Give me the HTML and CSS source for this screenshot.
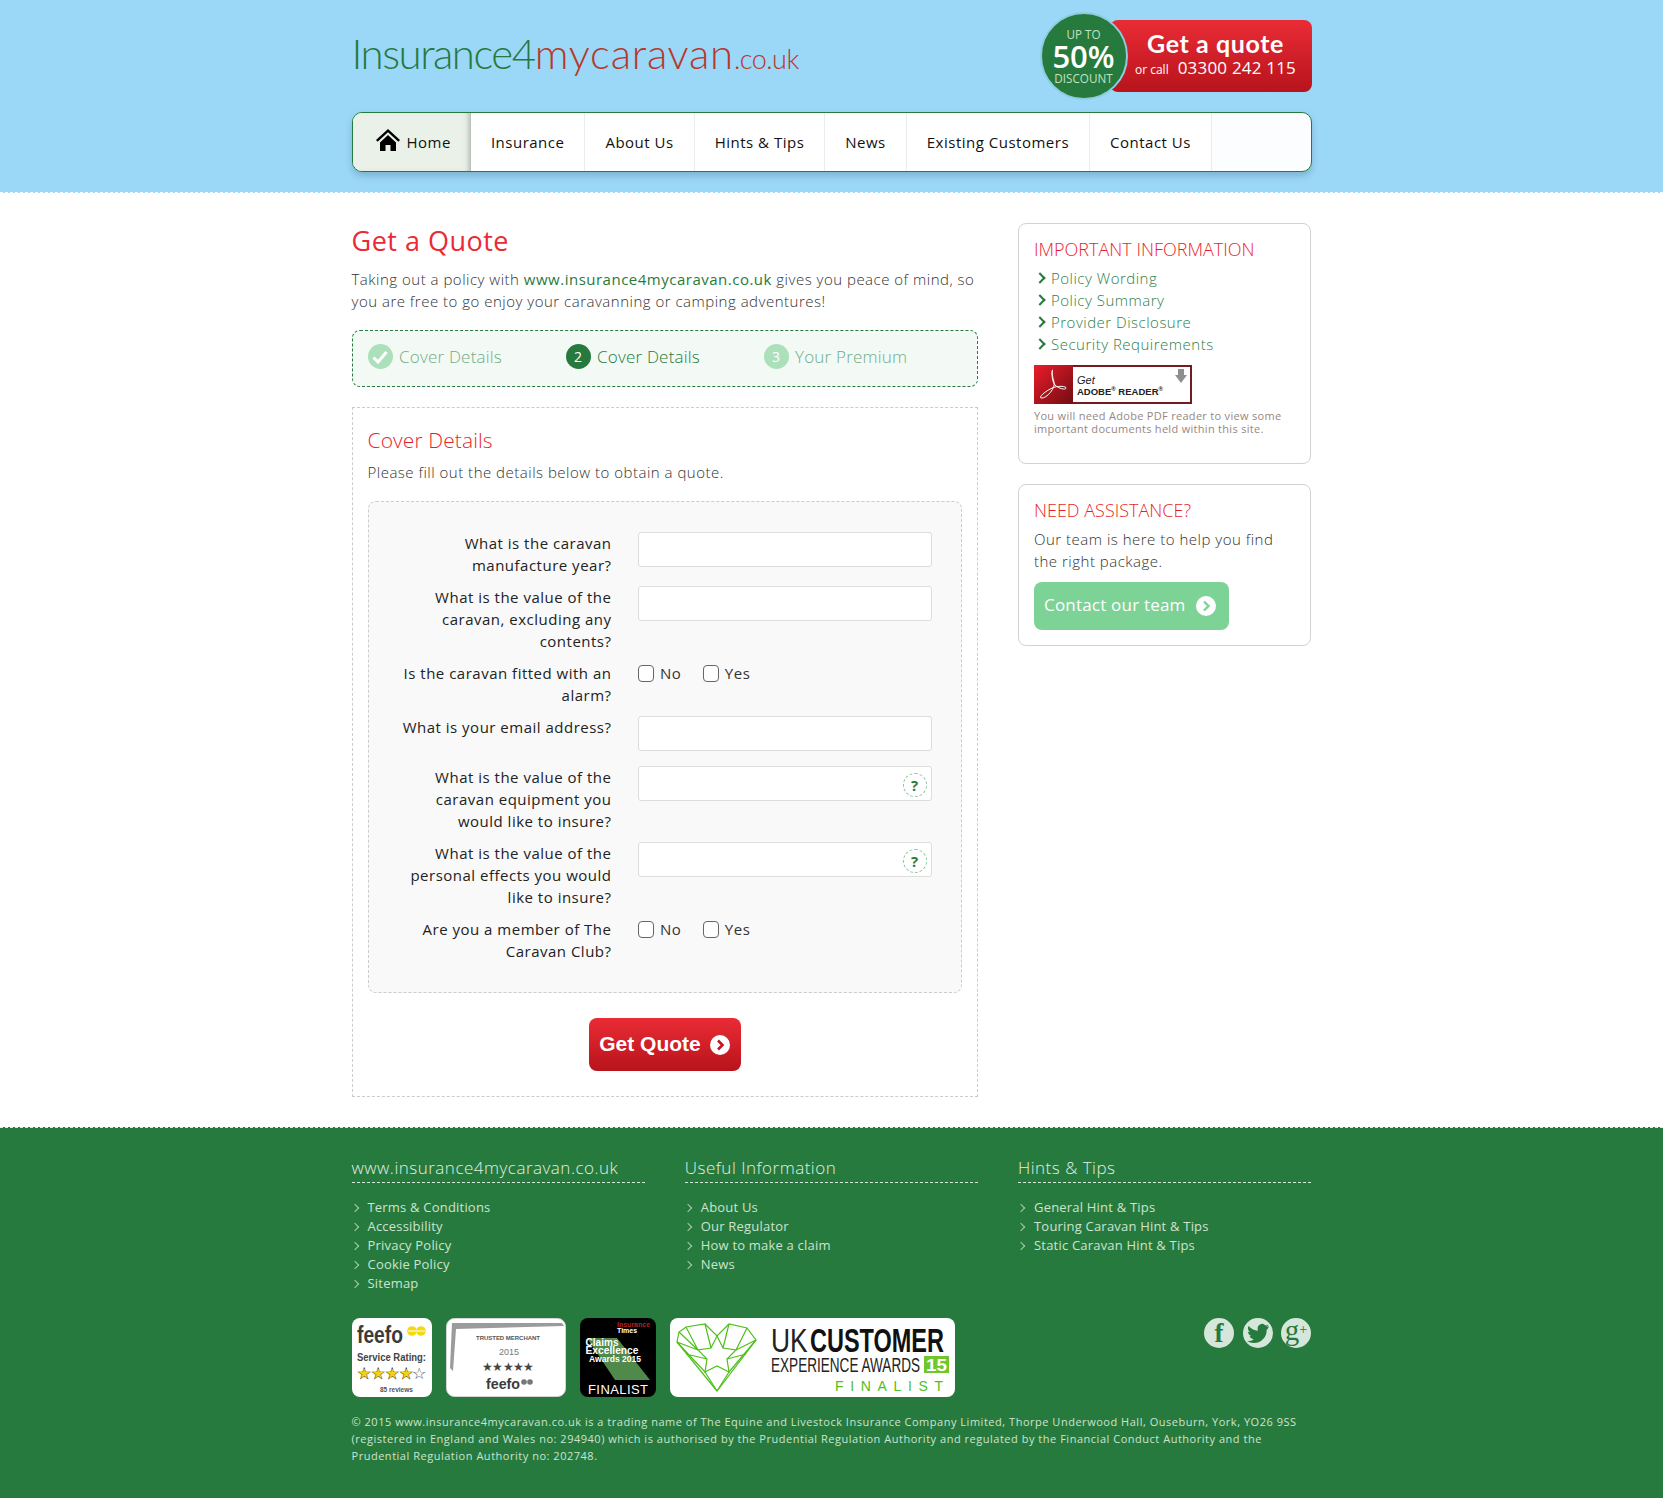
FILE: index.html
```html
<!DOCTYPE html>
<html lang="en">
<head>
<meta charset="utf-8">
<title>Get a Quote - Insurance4mycaravan.co.uk</title>
<link rel="stylesheet" href="styles.css">
</head>
<body>
<header class="site-header">
  <div class="wrap">
    <div class="top-row">
      <a class="logo" href="#"><span class="logo-green">Insurance4</span><span class="logo-red">mycaravan</span><span class="logo-tld">.co.uk</span></a>
      <div class="promo">
        <div class="promo-badge"><span class="pb-small">UP TO</span><span class="pb-big">50%</span><span class="pb-small">DISCOUNT</span></div>
        <div class="promo-cta">
          <span class="cta-main">Get a quote</span>
          <span class="cta-sub"><small>or call</small><b>03300 242 115</b></span>
        </div>
      </div>
    </div>
    <nav class="nav">
      <a class="nav-item nav-home" href="#">
        <svg class="home-icon" viewBox="0 0 24 22" width="24" height="22"><path d="M12 0 0 11l1.600 1.800L12 3.200l10.400 9.600L24 11z" fill="#000"/><path d="M4 13.500 12 6l8 7.500V22h-5.500v-6h-5v6H4z" fill="#000"/></svg>
        Home</a>
      <a class="nav-item" href="#">Insurance</a>
      <a class="nav-item" href="#">About Us</a>
      <a class="nav-item" href="#">Hints &amp; Tips</a>
      <a class="nav-item" href="#">News</a>
      <a class="nav-item" href="#">Existing Customers</a>
      <a class="nav-item" href="#">Contact Us</a>
    </nav>
  </div>
</header>

<main class="wrap main">
  <section class="content">
    <h1>Get a Quote</h1>
    <p class="intro">Taking out a policy with <a href="#">www.insurance4mycaravan.co.uk</a> gives you peace of mind, so you are free to go enjoy your caravanning or camping adventures!</p>
    <div class="steps">
      <div class="step step-done"><span class="step-num"><svg viewBox="0 0 16 14" width="16" height="14"><path d="M1.500 7.500 6 12 14.500 2" fill="none" stroke="#fff" stroke-width="3"/></svg></span>Cover Details</div>
      <div class="step step-active"><span class="step-num">2</span>Cover Details</div>
      <div class="step step-next"><span class="step-num">3</span>Your Premium</div>
    </div>
    <div class="form-box">
      <h2>Cover Details</h2>
      <p class="form-intro">Please fill out the details below to obtain a quote.</p>
      <form class="fields">
        <label class="q">What is the caravan manufacture year?</label>
        <div class="a"><span class="input"></span></div>
        <label class="q">What is the value of the caravan, excluding any contents?</label>
        <div class="a"><span class="input"></span></div>
        <label class="q">Is the caravan fitted with an alarm?</label>
        <div class="a checks"><span class="check"><i></i>No</span><span class="check"><i></i>Yes</span></div>
        <label class="q">What is your email address?</label>
        <div class="a"><span class="input"></span></div>
        <label class="q">What is the value of the caravan equipment you would like to insure?</label>
        <div class="a"><span class="input"><span class="help">?</span></span></div>
        <label class="q">What is the value of the personal effects you would like to insure?</label>
        <div class="a"><span class="input"><span class="help">?</span></span></div>
        <label class="q">Are you a member of The Caravan Club?</label>
        <div class="a checks"><span class="check"><i></i>No</span><span class="check"><i></i>Yes</span></div>
      </form>
      <div class="submit-row">
        <a class="btn-quote" href="#"><span class="btn-label">Get Quote</span>
          <svg viewBox="0 0 20 20" width="20" height="20"><circle cx="10" cy="10" r="10" fill="#fff"/><path d="M8 5.500 12.500 10 8 14.500" fill="none" stroke="#c5161f" stroke-width="2.600"/></svg>
        </a>
      </div>
    </div>
  </section>

  <aside class="sidebar">
    <div class="card card-info">
      <h3>IMPORTANT INFORMATION</h3>
      <ul class="doc-list">
        <li>Policy Wording</li>
        <li>Policy Summary</li>
        <li>Provider Disclosure</li>
        <li>Security Requirements</li>
      </ul>
      <div class="adobe">
        <div class="adobe-red"><svg viewBox="0 0 38 38" width="38" height="38"><path d="M19 5c-2 0 0 9 1 12 2 5-7 17-13 16-3-1 7-9 14-11 4-1 11-1 11 1s-7 1-11-3c-3-3-4-15-2-15z" fill="none" stroke="#fff" stroke-width="1"/></svg></div>
        <div class="adobe-text"><em>Get</em><b>ADOBE<sup>®</sup> READER<sup>®</sup></b>
          <svg class="adobe-arrow" viewBox="0 0 12 14" width="12" height="14"><path d="M3 0h6v6h3l-6 8-6-8h3z" fill="#8e8e8e"/></svg>
        </div>
      </div>
      <p class="fine">You will need Adobe PDF reader to view some important documents held within this site.</p>
    </div>
    <div class="card card-help">
      <h3>NEED ASSISTANCE?</h3>
      <p>Our team is here to help you find the right package.</p>
      <a class="btn-contact" href="#"><span class="btn-label">Contact our team</span>
        <svg viewBox="0 0 20 20" width="20" height="20"><circle cx="10" cy="10" r="10" fill="#fff"/><path d="M8 5.500 12.500 10 8 14.500" fill="none" stroke="#7dd295" stroke-width="2.400"/></svg>
      </a>
    </div>
  </aside>
</main>

<footer class="site-footer">
  <div class="wrap">
    <div class="foot-cols">
      <div class="foot-col">
        <h4>www.insurance4mycaravan.co.uk</h4>
        <ul><li>Terms &amp; Conditions</li><li>Accessibility</li><li>Privacy Policy</li><li>Cookie Policy</li><li>Sitemap</li></ul>
      </div>
      <div class="foot-col">
        <h4>Useful Information</h4>
        <ul><li>About Us</li><li>Our Regulator</li><li>How to make a claim</li><li>News</li></ul>
      </div>
      <div class="foot-col">
        <h4>Hints &amp; Tips</h4>
        <ul><li>General Hint &amp; Tips</li><li>Touring Caravan Hint &amp; Tips</li><li>Static Caravan Hint &amp; Tips</li></ul>
      </div>
    </div>
    <div class="foot-badges">
      <div class="badges">
        <svg class="badge" viewBox="0 0 80 79" width="80" height="79">
          <rect width="80" height="79" rx="8" fill="#fff"/>
          <text x="5" y="25" class="b-feefo" font-size="24" textLength="46" lengthAdjust="spacingAndGlyphs">feefo</text>
          <circle cx="60" cy="13" r="4.800" fill="#f4d90f"/><circle cx="69" cy="13" r="4.800" fill="#f4d90f"/>
          <path d="M56 13h17" stroke="#fff" stroke-width="1"/>
          <text x="5" y="43" class="b-sans" font-size="10" font-weight="700" fill="#444" textLength="69" lengthAdjust="spacingAndGlyphs">Service Rating:</text>
          <text x="5" y="61" class="b-sans b-star" font-size="16" fill="#f3d20f" textLength="56" lengthAdjust="spacing">★★★★</text>
          <text x="60" y="61" class="b-sans" font-size="16" fill="#555">☆</text>
          <text x="28" y="74" class="b-sans" font-size="6.500" font-weight="700" fill="#555">85 reviews</text>
        </svg>
        <svg class="badge" viewBox="0 0 120 79" width="120" height="79">
          <rect x=".5" y=".5" width="119" height="78" rx="8" fill="#fff" stroke="#d5d5d5"/>
          <path d="M6 5h110l2 3-108 3-3 42-3-3z" fill="#9b9b9b"/>
          <text x="30" y="22" class="b-sans" font-size="6" font-weight="700" fill="#555" textLength="64" lengthAdjust="spacing">TRUSTED MERCHANT</text>
          <text x="53" y="37" class="b-sans" font-size="9" fill="#777">2015</text>
          <text x="36" y="53" class="b-sans" font-size="12" fill="#444" textLength="52" lengthAdjust="spacing">★★★★★</text>
          <text x="40" y="71" class="b-feefo" font-size="15" textLength="34" lengthAdjust="spacingAndGlyphs">feefo</text>
          <circle cx="78" cy="64" r="2.800" fill="#777"/><circle cx="84" cy="64" r="2.800" fill="#777"/>
        </svg>
        <svg class="badge" viewBox="0 0 76 79" width="76" height="79">
          <rect width="76" height="79" rx="8" fill="#000"/>
          <path d="M7 20h30l33 42H35z" fill="#4f8a4a"/>
          <text x="37" y="9" class="b-sans" font-size="7" font-weight="700" fill="#b3201f">Insurance</text>
          <text x="37" y="15" class="b-sans" font-size="7" font-weight="700" fill="#fff">Times</text>
          <text x="5.500" y="28" class="b-sans" font-size="11" font-weight="700" fill="#fff" textLength="33" lengthAdjust="spacingAndGlyphs">Claims</text>
          <text x="5.500" y="36" class="b-sans" font-size="11" font-weight="700" fill="#fff" textLength="53" lengthAdjust="spacingAndGlyphs">Excellence</text>
          <text x="9" y="44" class="b-sans" font-size="9" font-weight="700" fill="#fff" textLength="52" lengthAdjust="spacingAndGlyphs">Awards 2015</text>
          <text x="8" y="76" class="b-sans" font-size="13" fill="#fff" textLength="60" lengthAdjust="spacing">FINALIST</text>
        </svg>
        <svg class="badge" viewBox="0 0 285 79" width="285" height="79">
          <rect width="285" height="79" rx="8" fill="#fff"/>
          <g fill="none" stroke="#4fc01a" stroke-width="1.200">
            <path d="M47 73 7 24l2-10 7-5 19-3 12 12 12-12 18 4 9 12z"/>
            <path d="M47 18l6 12 13 2-9 9 2 13-12-6-12 6 2-13-9-9 13-2z"/>
            <path d="M28 32 7 24M28 32 16 9M41 30 35 6M28 32 9 14M35 54 47 73M59 54 47 73M35 54 7 24M59 54 86 22M66 32 86 22M66 32 77 10M53 30 59 6M37 41 16 36M57 41 76 36"/>
          </g>
          <text transform="translate(101 34) scale(.78 1)" class="b-sans" font-size="34" fill="#222" textLength="47" lengthAdjust="spacingAndGlyphs">UK</text>
          <text transform="translate(140 34) scale(.66 1)" class="b-sans" font-size="34" font-weight="700" fill="#111" textLength="203" lengthAdjust="spacingAndGlyphs">CUSTOMER</text>
          <text transform="translate(101 54) scale(.72 1)" class="b-sans" font-size="20" fill="#222" textLength="207" lengthAdjust="spacingAndGlyphs">EXPERIENCE AWARDS</text>
          <rect x="254" y="38" width="25" height="17" fill="#71c62e"/>
          <text x="256" y="53" class="b-sans" font-size="16" font-weight="700" fill="#fff" textLength="21" lengthAdjust="spacingAndGlyphs">15</text>
          <text x="165" y="73" class="b-sans" font-size="14" fill="#4fc01a" textLength="108" lengthAdjust="spacing">FINALIST</text>
        </svg>
      </div>
      <div class="social">
        <a class="soc soc-f" href="#">f</a>
        <a class="soc" href="#" aria-label="Twitter"><svg viewBox="0 0 24 24" width="24" height="24"><path d="M23 5.200c-.8.400-1.700.6-2.600.7.900-.6 1.600-1.400 2-2.500-.9.500-1.800.9-2.900 1.100A4.500 4.500 0 0 0 11.800 8.700c0 .4 0 .7.100 1C8.100 9.500 4.800 7.700 2.600 5c-.4.700-.6 1.400-.6 2.300 0 1.600.8 3 2 3.800-.7 0-1.400-.2-2-.6 0 2.200 1.500 4.100 3.600 4.500-.7.200-1.400.2-2 .1.600 1.800 2.200 3.100 4.200 3.100A9 9 0 0 1 1 20c2 1.300 4.300 2 6.900 2 8.300 0 12.800-6.900 12.800-12.800v-.6c.9-.6 1.700-1.400 2.300-3.400z" fill="#277a3d"/></svg></a>
        <a class="soc soc-g" href="#">g<sup>+</sup></a>
      </div>
    </div>
    <p class="legal">© 2015 www.insurance4mycaravan.co.uk is a trading name of The Equine and Livestock Insurance Company Limited, Thorpe Underwood Hall, Ouseburn, York, YO26 9SS (registered in England and Wales no: 294940) which is authorised by the Prudential Regulation Authority and regulated by the Financial Conduct Authority and the Prudential Regulation Authority no: 202748.</p>
  </div>
</footer>
</body>
</html>
```

FILE: styles.css
```css
* { box-sizing: border-box; }
html, body { margin: 0; padding: 0; }
body { font-family: "Open Sans", "Liberation Sans", sans-serif; background: #fff; color: #444; font-size: 15px; }
a { text-decoration: none; color: inherit; }
ul { list-style: none; margin: 0; padding: 0; }
h1, h2, h3, h4, p { margin: 0; font-weight: 400; }
.wrap { width: 959.5px; margin-left: 351.5px; }

/* header */
.site-header { background: #9bd7f7; height: 193px; padding-top: 13px; border-bottom: 1px dashed #fff; }
.top-row { display: flex; justify-content: space-between; height: 86px; margin: 0 -.5px 13px 0; }
.logo { font-family: Lato, "Open Sans", sans-serif; font-weight: 300; font-size: 42px; line-height: 58px; white-space: nowrap; display: flex; align-items: baseline; margin-top: 11px; height: 58px; }
.logo-green { color: #277a3d; letter-spacing: -1.5px; }
.logo-red { color: #b5392c; letter-spacing: .75px; }
.logo-tld { color: #b5392c; font-size: 27px; letter-spacing: -.5px; }
.promo { display: flex; align-items: center; }
.promo-badge { width: 88px; height: 88px; flex: none; border-radius: 50%; background: #277a3d; border: 2px solid #8ccde0; display: flex; flex-direction: column; align-items: center; justify-content: center; margin-right: -18px; position: relative; z-index: 1; color: #fff; }
.pb-small { font-size: 11.7px; line-height: 13px; color: #c2e2c2; }
.pb-big { font-size: 31px; line-height: 31px; font-weight: 600; }
.promo-cta { width: 202px; height: 72px; padding: 9px 14px 0 24px; border-radius: 8px; background: linear-gradient(#e92c36, #b8131b); color: #fff; display: flex; flex-direction: column; align-items: center; }
.cta-main { font-family: Lato, sans-serif; font-weight: 700; font-size: 25px; line-height: 28px; letter-spacing: .6px; white-space: nowrap; }
.cta-sub { display: flex; align-items: baseline; white-space: nowrap; line-height: 22px; }
.cta-sub small { font-size: 12px; margin-right: 9px; }
.cta-sub b { font-weight: 400; font-size: 17px; letter-spacing: .2px; }
.nav { display: flex; height: 60px; margin-right: -.5px; background: #fbfdfe; border: 1px solid #277a3d; border-radius: 10px; overflow: hidden; box-shadow: 0 4px 6px rgba(40, 80, 100, .25); }
.nav-item { display: flex; align-items: center; padding: 0 20px; background: #fff; border-right: 1px solid #e9edee; color: #111; font-size: 15px; letter-spacing: .5px; white-space: nowrap; }
.nav-home { background: #eaf1e9; border-right: 0; padding: 0 20px 0 23px; gap: 7px; box-shadow: inset -6px 0 6px -5px rgba(70, 80, 70, .5); }
.home-icon { margin-top: -5px; }

/* main */
.main { display: flex; justify-content: space-between; padding-top: 30px; padding-bottom: 30px; }
.content { width: 626px; }
.sidebar { width: 293px; }
h1 { font-size: 27px; line-height: 36px; color: #ea2a35; letter-spacing: .5px; }
.intro { font-size: 15px; line-height: 22px; font-weight: 300; margin-top: 9px; color: #333; letter-spacing: .5px; }
.intro a { color: #277a3d; font-weight: 400; }
.steps { display: flex; height: 57px; margin-top: 18px; padding: 13px 15px 0; background: #f3f9f4; border: 1px dashed #277a3d; border-radius: 8px; }
.step { width: 198px; display: flex; align-items: center; height: 25px; gap: 6.500px; font-size: 17px; font-weight: 300; letter-spacing: .2px; white-space: nowrap; }
.step-num { width: 25px; height: 25px; border-radius: 50%; display: flex; align-items: center; justify-content: center; font-size: 14px; color: #fff; font-weight: 400; }
.step-done, .step-next { color: #6fae84; }
.step-done .step-num, .step-next .step-num { background: #abe0ba; }
.step-active { color: #277a3d; }
.step-active .step-num { background: #277a3d; }
.form-box { margin-top: 20px; padding: 17px 15px 25px; border: 1px dashed #ccc; }
h2 { font-size: 21px; line-height: 30px; color: #e81f2b; font-weight: 300; letter-spacing: .1px; }
.form-intro { margin-top: 6px; line-height: 22px; font-size: 15px; font-weight: 300; letter-spacing: .5px; color: #333; }
.fields { margin-top: 18px; padding: 30px 30px 20px 28px; display: grid; grid-template-columns: 215px 293.5px; column-gap: 26.5px; background: #f9f9f9; border: 1px dashed #ccc; border-radius: 8px; }
.q { display: block; text-align: right; line-height: 22px; padding-bottom: 10px; font-size: 15px; color: #222; letter-spacing: .5px; }
.a { min-width: 0; }
.input { display: block; position: relative; height: 35px; margin-bottom: 15px; background: #fff; border: 1px solid #ddd; border-radius: 3px; }
.help { position: absolute; right: 4px; top: 6px; width: 24px; height: 24px; border: 1px dashed #8cc79e; border-radius: 50%; display: flex; align-items: center; justify-content: center; color: #277a3d; font-size: 15px; font-weight: 700; }
.checks { display: flex; gap: 21.5px; }
.check { display: flex; gap: 6px; line-height: 22px; height: 22px; color: #333; letter-spacing: .5px; font-size: 15px; }
.check i { width: 16px; height: 17px; margin-top: 3px; background: #fff; border: 1px solid #666; border-radius: 4px; }
.submit-row { display: flex; justify-content: center; margin-top: 25px; }
.btn-quote { width: 152px; height: 53px; display: flex; align-items: center; justify-content: center; gap: 9px; border-radius: 8px; background: linear-gradient(#ea2c36, #b8131b); color: #fff; font-family: "Liberation Sans", Arial, sans-serif; font-size: 21px; font-weight: 700; }
.btn-label { padding-bottom: 2px; }

/* sidebar */
.card { border: 1px solid #d2d2d2; border-radius: 8px; padding: 13px 15px 14px; }
.card h3 { font-size: 18px; line-height: 24px; color: #e81f2b; font-weight: 300; }
.card-info { height: 241px; }
.doc-list { margin-top: 6px; }
.doc-list li { position: relative; padding-left: 17px; line-height: 22px; font-size: 15px; font-weight: 300; letter-spacing: .5px; color: #2f8048; }
.doc-list li::before { content: ""; position: absolute; left: 1.5px; top: 7px; width: 6px; height: 6px; border-top: 2px solid #277a3d; border-right: 2px solid #277a3d; transform: rotate(45deg); }
.adobe { display: flex; width: 158px; height: 39px; margin-top: 10px; background: #fff; border: 2px solid #751a1f; }
.adobe-red { width: 39px; background: linear-gradient(135deg, #ec1c2a, #6f0d12); flex: none; margin: -2px 0 -2px -2px; }
.adobe-text { position: relative; flex: 1; padding: 7px 0 0 4px; color: #222; font-family: "Liberation Sans", sans-serif; font-size: 9.500px; line-height: 12px; display: flex; flex-direction: column; }
.adobe-text em { font-size: 11px; }
.adobe-text sup { font-size: 6px; line-height: 0; }
.adobe-arrow { position: absolute; right: 3px; top: 2px; }
.fine { margin-top: 5px; font-size: 11px; line-height: 13px; color: #968783; letter-spacing: .3px; }
.card-help { margin-top: 20px; height: 162px; }
.card-help p { margin-top: 6px; line-height: 22px; font-size: 15px; font-weight: 300; color: #333; letter-spacing: .5px; }
.btn-contact { display: flex; width: 195px; height: 48px; margin-top: 10px; padding-left: 10px; align-items: center; gap: 10px; border-radius: 8px; background: #7dd295; color: #fff; font-size: 17px; letter-spacing: .2px; white-space: nowrap; }
.btn-contact .btn-label { padding-bottom: 4px; }

/* footer */
.site-footer { height: 371px; background: #277a3d; border-top: 1px dashed #dfeee3; padding-top: 28px; color: #cde3d1; }
.foot-cols { display: flex; gap: 40.25px; height: 137px; }
.foot-col { width: 293px; }
.foot-col h4 { font-size: 17px; line-height: 24px; font-weight: 300; padding-bottom: 2px; border-bottom: 1px dashed #d6e8da; color: #e2efe3; letter-spacing: .5px; white-space: nowrap; }
.foot-col ul { margin-top: 15px; }
.foot-col li { position: relative; padding-left: 16px; font-size: 13px; line-height: 19px; letter-spacing: .2px; }
.foot-col li::before { content: ""; position: absolute; left: 0; top: 7px; width: 5px; height: 5px; border-top: 1px solid #a9cdb1; border-right: 1px solid #a9cdb1; transform: rotate(45deg); }
.foot-badges { display: flex; justify-content: space-between; margin-top: 25px; }
.badges { display: flex; gap: 14px; }
.badge { display: block; flex: none; }
.b-sans { font-family: "Liberation Sans", sans-serif; }
.b-feefo { font-family: "Liberation Sans", sans-serif; font-weight: 700; fill: #3b3b3b; }
.b-star { stroke: #333; stroke-width: .4px; }
.social { display: flex; gap: 8.500px; align-items: flex-start; }
.soc { width: 30px; height: 30px; border-radius: 50%; background: #d5e7db; display: flex; align-items: center; justify-content: center; color: #277a3d; font-family: "Liberation Serif", serif; font-weight: 700; font-size: 27px; line-height: 30px; }
.soc-g { font-weight: 400; font-size: 29px; padding-bottom: 7px; }
.soc-g sup { font-size: 14px; line-height: 0; }
.legal { margin-top: 16px; font-size: 11px; line-height: 17px; letter-spacing: .52px; color: #cde3d1; }
```
